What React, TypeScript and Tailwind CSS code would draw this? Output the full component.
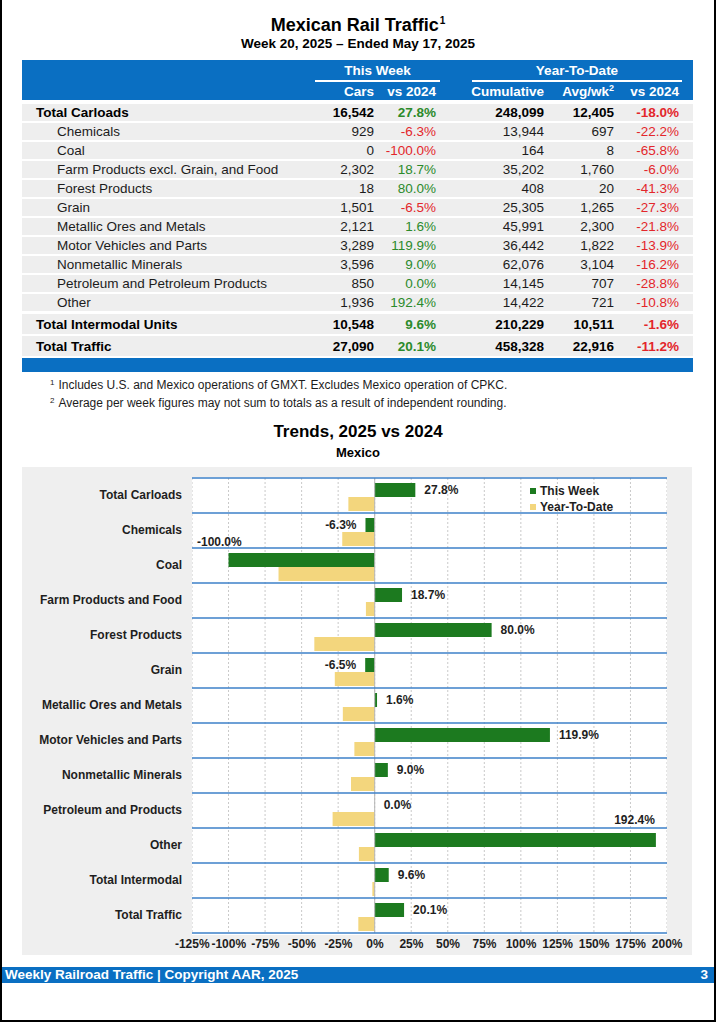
import React from "react";

type Row = {
  label: string;
  bold?: boolean;
  cars: string;
  wk: string;
  cum: string;
  avg: string;
  ytd: string;
};

const rows: Row[] = [
  { label: "Total Carloads", bold: true, cars: "16,542", wk: "27.8%", cum: "248,099", avg: "12,405", ytd: "-18.0%" },
  { label: "Chemicals", cars: "929", wk: "-6.3%", cum: "13,944", avg: "697", ytd: "-22.2%" },
  { label: "Coal", cars: "0", wk: "-100.0%", cum: "164", avg: "8", ytd: "-65.8%" },
  { label: "Farm Products excl. Grain, and Food", cars: "2,302", wk: "18.7%", cum: "35,202", avg: "1,760", ytd: "-6.0%" },
  { label: "Forest Products", cars: "18", wk: "80.0%", cum: "408", avg: "20", ytd: "-41.3%" },
  { label: "Grain", cars: "1,501", wk: "-6.5%", cum: "25,305", avg: "1,265", ytd: "-27.3%" },
  { label: "Metallic Ores and Metals", cars: "2,121", wk: "1.6%", cum: "45,991", avg: "2,300", ytd: "-21.8%" },
  { label: "Motor Vehicles and Parts", cars: "3,289", wk: "119.9%", cum: "36,442", avg: "1,822", ytd: "-13.9%" },
  { label: "Nonmetallic Minerals", cars: "3,596", wk: "9.0%", cum: "62,076", avg: "3,104", ytd: "-16.2%" },
  { label: "Petroleum and Petroleum Products", cars: "850", wk: "0.0%", cum: "14,145", avg: "707", ytd: "-28.8%" },
  { label: "Other", cars: "1,936", wk: "192.4%", cum: "14,422", avg: "721", ytd: "-10.8%" },
  { label: "Total Intermodal Units", bold: true, cars: "10,548", wk: "9.6%", cum: "210,229", avg: "10,511", ytd: "-1.6%" },
  { label: "Total Traffic", bold: true, cars: "27,090", wk: "20.1%", cum: "458,328", avg: "22,916", ytd: "-11.2%" },
];

// chart rows: label, this week, ytd
const trends: [string, number, number][] = [
  ["Total Carloads", 27.8, -18.0],
  ["Chemicals", -6.3, -22.2],
  ["Coal", -100.0, -65.8],
  ["Farm Products and Food", 18.7, -6.0],
  ["Forest Products", 80.0, -41.3],
  ["Grain", -6.5, -27.3],
  ["Metallic Ores and Metals", 1.6, -21.8],
  ["Motor Vehicles and Parts", 119.9, -13.9],
  ["Nonmetallic Minerals", 9.0, -16.2],
  ["Petroleum and Products", 0.0, -28.8],
  ["Other", 192.4, -10.8],
  ["Total Intermodal", 9.6, -1.6],
  ["Total Traffic", 20.1, -11.2],
];

const ticks = ["-125%", "-100%", "-75%", "-50%", "-25%", "0%", "25%", "50%", "75%", "100%", "125%", "150%", "175%", "200%"];

const W = 475;
const S = W / 325;
const X0 = 125 * S;
const RH = 35;

const pctColor = (v: string) => (v.startsWith("-") ? "text-[#e3262b]" : "text-[#2b8a2b]");

const TableRow = ({ r }: { r: Row }) => {
  const big = r.label.startsWith("Total") && r.label !== "Total Carloads";
  return (
    <div
      className={`grid grid-cols-[298px_54px_62px_108px_70px_65px_14px] items-center bg-[#eeeeee] ${
        big ? "h-[20px]" : "h-[17px]"
      } ${r.bold ? "font-bold text-black" : "text-[#1c1c1c]"}`}
    >
      <div className={r.bold ? "pl-[14px]" : "pl-[35px]"}>{r.label}</div>
      <div className="text-right">{r.cars}</div>
      <div className={`text-right ${pctColor(r.wk)}`}>{r.wk}</div>
      <div className="text-right">{r.cum}</div>
      <div className="text-right">{r.avg}</div>
      <div className={`text-right ${pctColor(r.ytd)}`}>{r.ytd}</div>
      <div />
    </div>
  );
};

const Chart = () => {
  const labelPos = (i: number, v: number) => {
    const top = i * RH + 1;
    const end = X0 + v * S;
    if (v <= -100) return { x: 5, y: top - 6, anchor: "start" as const };
    if (v > 190) return { x: end - 1, y: top - 8, anchor: "end" as const };
    if (v < 0) return { x: end - 9, y: top + 12, anchor: "end" as const };
    return { x: end + 9, y: top + 12, anchor: "start" as const };
  };
  return (
    <svg width={W} height={458} className="block">
      <rect x={0} y={0} width={W} height={458} fill="#ffffff" />
      {ticks.map((_, k) => (
        <line
          key={k}
          x1={k * 25 * S}
          x2={k * 25 * S}
          y1={1}
          y2={456}
          stroke="#c9c9c9"
          strokeWidth={1}
          strokeDasharray="2 2"
        />
      ))}
      {trends.map(([, wk, ytd], i) => {
        const top = i * RH + 1;
        return (
          <g key={i}>
            <rect x={wk < 0 ? X0 + wk * S : X0} y={top + 5} width={Math.max(Math.abs(wk * S), 0.01)} height={14} fill="#1c7a1f" />
            <rect x={X0 + ytd * S} y={top + 19} width={Math.abs(ytd * S)} height={14} fill="#f3d67d" />
          </g>
        );
      })}
      <line x1={X0} x2={X0} y1={1} y2={456} stroke="#b5b5b5" strokeWidth={1} />
      {Array.from({ length: 14 }).map((_, k) => (
        <line key={k} x1={0} x2={W} y1={k * RH + 1} y2={k * RH + 1} stroke="#3d80c8" strokeWidth={1.6} />
      ))}
      {trends.map(([, wk], i) => {
        const p = labelPos(i, wk);
        return (
          <text
            key={i}
            x={p.x}
            y={p.y}
            textAnchor={p.anchor}
            dominantBaseline="central"
            fontSize={12}
            fontWeight={700}
            fill="#1e1e1e"
            fontFamily="'Liberation Sans', Arial, sans-serif"
          >
            {wk.toFixed(1)}%
          </text>
        );
      })}
      <g fontFamily="'Liberation Sans', Arial, sans-serif" fontSize={12} fontWeight={700} fill="#1e1e1e">
        <rect x={338} y={11} width={6} height={6} fill="#1c7a1f" />
        <text x={348} y={14} dominantBaseline="central">This Week</text>
        <rect x={338} y={27} width={6} height={6} fill="#f3d67d" />
        <text x={348} y={30} dominantBaseline="central">Year-To-Date</text>
      </g>
    </svg>
  );
};

export default function App() {
  return (
    <div className="w-[716px] h-[1022px] border-x-2 border-b-2 border-black bg-white flex flex-col font-['Liberation_Sans',Arial,sans-serif] text-black">
      <div className="pt-[15px] text-center">
        <h1 className="text-[18px] leading-[20px] font-bold">
          Mexican Rail Traffic<sup className="text-[10px] relative -top-[7px] ml-[1px]">1</sup>
        </h1>
        <div className="mt-[1px] text-[13.5px] leading-[16px] font-bold">Week 20, 2025 – Ended May 17, 2025</div>
      </div>

      <div className="mt-[8px] ml-[20px] w-[671px] text-[13.5px]">
        <div className="bg-[#0a6fc2] text-white font-bold h-[40px]">
          <div className="flex h-[22px]">
            <div className="w-[293px]" />
            <div className="w-[125px] text-center leading-[18px] pt-[2px] border-b-2 border-white">This Week</div>
            <div className="w-[32px]" />
            <div className="w-[210px] text-center leading-[18px] pt-[2px] border-b-2 border-white">Year-To-Date</div>
          </div>
          <div className="grid grid-cols-[298px_54px_62px_108px_70px_65px_14px] h-[18px] items-center">
            <div />
            <div className="text-right">Cars</div>
            <div className="text-right">vs 2024</div>
            <div className="text-right">Cumulative</div>
            <div className="text-right">
              Avg/wk<sup className="text-[9px] relative -top-[5px]">2</sup>
            </div>
            <div className="text-right">vs 2024</div>
            <div />
          </div>
        </div>
        <div className="flex flex-col pt-[4px] gap-[2px] leading-[17px]">
          {rows.map((r, i) => (
            <div key={r.label} className={i === 11 ? "mt-[1px]" : ""}>
              <TableRow r={r} />
            </div>
          ))}
        </div>
        <div className="mt-[2px] h-[14px] bg-[#0a6fc2]" />
      </div>

      <div className="mt-[4px] pl-[48px] text-[12px] leading-[18px] text-[#1c1c1c]">
        <div>
          <sup className="text-[8px] relative -top-[4px] mr-[4px]">1</sup>Includes U.S. and Mexico operations of GMXT. Excludes Mexico operation of CPKC.
        </div>
        <div>
          <sup className="text-[8px] relative -top-[4px] mr-[4px]">2</sup>Average per week figures may not sum to totals as a result of independent rounding.
        </div>
      </div>

      <div className="mt-[9px] text-center text-[17px] leading-[22px] font-bold">Trends, 2025 vs 2024</div>
      <div className="mt-[2px] text-center text-[13px] leading-[16px] font-bold">Mexico</div>

      <div className="mt-[6px] ml-[20px] w-[670px] h-[488px] bg-[#efefef] pt-[10px] text-[12px] font-bold text-[#1e1e1e]">
        <div className="flex">
          <div className="w-[160px] flex flex-col">
            {trends.map(([l]) => (
              <div key={l} className="h-[35px] flex items-center justify-end whitespace-nowrap">
                {l}
              </div>
            ))}
          </div>
          <div className="ml-[10px]">
            <Chart />
            <div className="flex -ml-[18px] mt-[1px] leading-[16px]">
              {ticks.map((t) => (
                <div key={t} className="w-[36.54px] text-center whitespace-nowrap">
                  {t}
                </div>
              ))}
            </div>
          </div>
        </div>
      </div>

      <div className="mt-[12px] h-[16px] bg-[#0a6fc2] text-white font-bold text-[13.5px] leading-[16px] flex justify-between pl-[3px] pr-[6px]">
        <span>Weekly Railroad Traffic | Copyright AAR, 2025</span>
        <span>3</span>
      </div>
    </div>
  );
}
